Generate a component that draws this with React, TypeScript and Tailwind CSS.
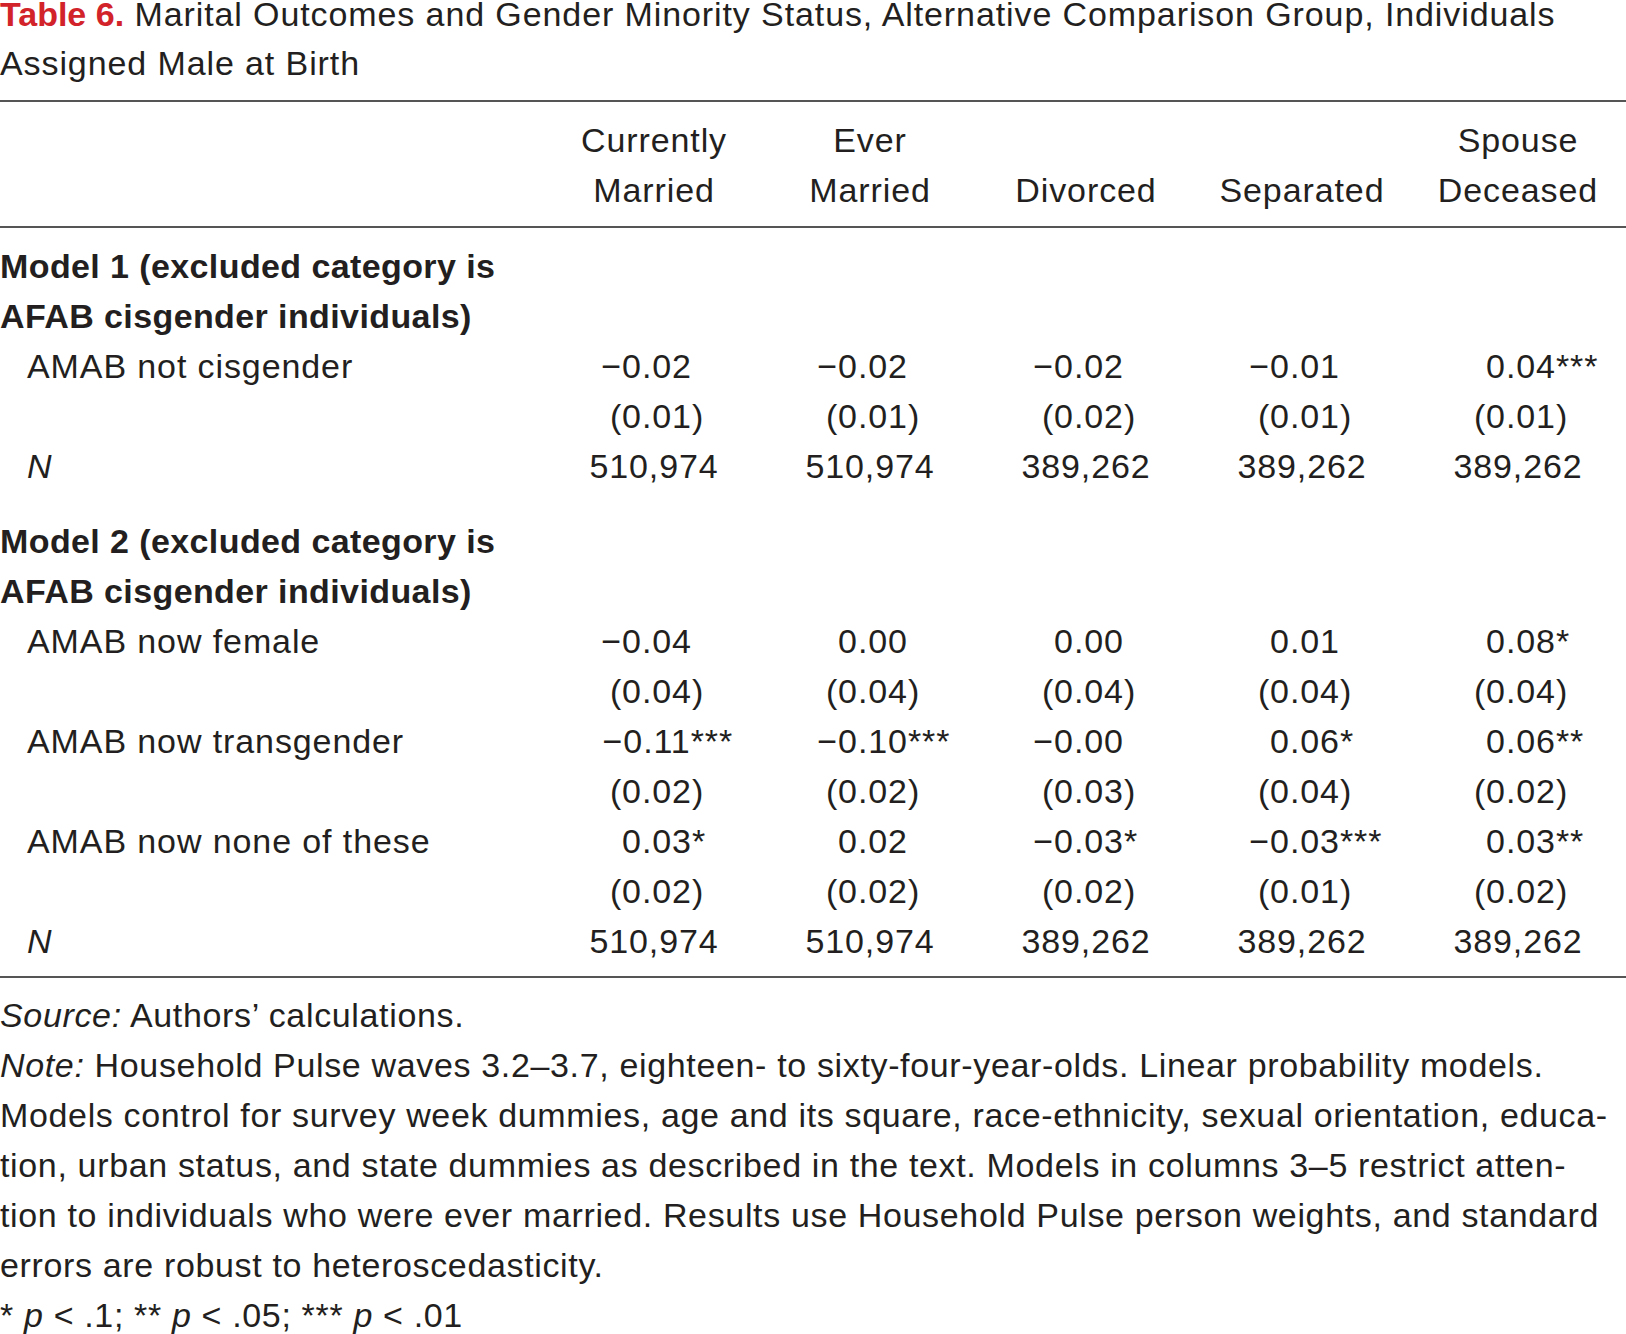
import type { ReactNode } from 'react'

type Cell = string

interface DataRow {
  label: ReactNode
  coefs?: Cell[]
  ses?: Cell[]
  counts?: Cell[]
}

const N_M1 = ['510,974', '510,974', '389,262', '389,262', '389,262']

const model1: DataRow[] = [
  {
    label: 'AMAB not cisgender',
    coefs: ['−0.02', '−0.02', '−0.02', '−0.01', '0.04***'],
    ses: ['(0.01)', '(0.01)', '(0.02)', '(0.01)', '(0.01)'],
  },
  { label: <i>N</i>, counts: N_M1 },
]

const model2: DataRow[] = [
  {
    label: 'AMAB now female',
    coefs: ['−0.04', '0.00', '0.00', '0.01', '0.08*'],
    ses: ['(0.04)', '(0.04)', '(0.04)', '(0.04)', '(0.04)'],
  },
  {
    label: 'AMAB now transgender',
    coefs: ['−0.11***', '−0.10***', '−0.00', '0.06*', '0.06**'],
    ses: ['(0.02)', '(0.02)', '(0.03)', '(0.04)', '(0.02)'],
  },
  {
    label: 'AMAB now none of these',
    coefs: ['0.03*', '0.02', '−0.03*', '−0.03***', '0.03**'],
    ses: ['(0.02)', '(0.02)', '(0.02)', '(0.01)', '(0.02)'],
  },
  { label: <i>N</i>, counts: N_M1 },
]

// split "−0.11***" into prefix / core / suffix so the digits line up
function splitValue(v: string) {
  const m = v.match(/^([−(]?)([0-9.]+)(.*)$/)
  if (!m) return { pre: '', core: v, post: '' }
  return { pre: m[1], core: m[2], post: m[3] }
}

function Value({ v }: { v: string }) {
  const { pre, core, post } = splitValue(v)
  return (
    <div className="grid grid-cols-[1fr_auto_1fr] pl-[6px]">
      <span className="text-right">{pre}</span>
      <span>{core}</span>
      <span className="text-left">{post}</span>
    </div>
  )
}

function Rows({ rows }: { rows: DataRow[] }) {
  return (
    <>
      {rows.map((r, i) => (
        <div key={i} className="contents">
          <div className="pl-[27px] whitespace-nowrap">{r.label}</div>
          {r.coefs
            ? r.coefs.map((c, j) => <Value key={j} v={c} />)
            : r.counts!.map((c, j) => (
                <div key={j} className="text-center">
                  {c}
                </div>
              ))}
          {r.ses && (
            <>
              <div />
              {r.ses.map((c, j) => (
                <Value key={j} v={c} />
              ))}
            </>
          )}
        </div>
      ))}
    </>
  )
}

function ModelHeading({ n }: { n: number }) {
  return (
    <div className="col-span-6 font-bold tracking-[0.4px]">
      Model {n} (excluded category is
      <br />
      AFAB cisgender individuals)
    </div>
  )
}

const headers: [string, string][] = [
  ['Currently', 'Married'],
  ['Ever', 'Married'],
  ['', 'Divorced'],
  ['', 'Separated'],
  ['Spouse', 'Deceased'],
]

export default function App() {
  return (
    <div
      className="w-[1626px] h-[1334px] overflow-hidden bg-white text-[#231f20] text-[34px] leading-[50px]"
      style={{ fontFamily: '"Liberation Sans", Arial, sans-serif' }}
    >
      {/* caption */}
      <div className="mb-[12px] tracking-[0.9px] whitespace-nowrap">
        <div className="leading-[28px]">
          <span className="font-bold text-[#d2232a] tracking-normal">Table 6.</span> Marital
          Outcomes and Gender Minority Status, Alternative Comparison Group, Individuals
        </div>
        <div className="mt-[10px]">Assigned Male at Birth</div>
      </div>

      <div className="h-[2px] bg-[#555]" />

      {/* column headers */}
      <div className="grid grid-cols-[546px_repeat(5,216px)] pt-[13px] pb-[11px] tracking-[0.9px]">
        <div />
        {headers.map(([a, b], i) => (
          <div key={i} className="text-center">
            <div className="h-[50px]">{a}</div>
            <div>{b}</div>
          </div>
        ))}
      </div>

      <div className="h-[2px] bg-[#555]" />

      {/* body */}
      <div className="grid grid-cols-[546px_repeat(5,216px)] pt-[13px] pb-[10px] tracking-[0.9px]">
        <ModelHeading n={1} />
        <Rows rows={model1} />
        <div className="col-span-6 h-[25px]" />
        <ModelHeading n={2} />
        <Rows rows={model2} />
      </div>

      <div className="h-[2px] bg-[#555]" />

      {/* notes */}
      <div className="pt-[12px] whitespace-nowrap tracking-[0.65px]">
        <div>
          <i>Source:</i> Authors’ calculations.
        </div>
        <div>
          <i>Note:</i> Household Pulse waves 3.2–3.7, eighteen- to sixty-four-year-olds. Linear
          probability models.
        </div>
        <div>
          Models control for survey week dummies, age and its square, race-ethnicity, sexual
          orientation, educa-
        </div>
        <div>
          tion, urban status, and state dummies as described in the text. Models in columns 3–5
          restrict atten-
        </div>
        <div>
          tion to individuals who were ever married. Results use Household Pulse person weights, and
          standard
        </div>
        <div>errors are robust to heteroscedasticity.</div>
        <div>
          * <i>p</i> &lt; .1; ** <i>p</i> &lt; .05; *** <i>p</i> &lt; .01
        </div>
      </div>
    </div>
  )
}
